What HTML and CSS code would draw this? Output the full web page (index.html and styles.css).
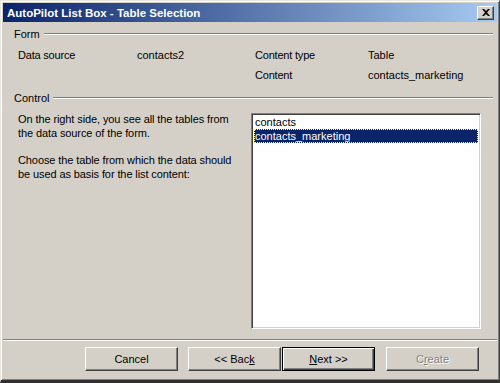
FILE: index.html
```html
<!DOCTYPE html>
<html>
<head>
<meta charset="utf-8">
<link rel="stylesheet" href="styles.css">
</head>
<body>
<div class="window">
  <div class="titlebar">
    <span class="title">AutoPilot List Box - Table Selection</span>
    <span class="close"><svg width="8" height="7" viewBox="0 0 8 7"><path d="M0 0h2l2 2 2-2h2L5 3.5 8 7H6L4 5 2 7H0l3-3.5z" fill="#000"/></svg></span>
  </div>
  <div class="body">
    <div class="group-head"><span>Form</span><span class="rule"></span></div>
    <div class="info">
      <div class="info-row">
        <span class="c1">Data source</span><span class="c2">contacts2</span><span class="c3">Content type</span><span class="c4">Table</span>
      </div>
      <div class="info-row">
        <span class="c1"></span><span class="c2"></span><span class="c3">Content</span><span class="c4">contacts_marketing</span>
      </div>
    </div>
    <div class="group-head control-head"><span>Control</span><span class="rule"></span></div>
    <div class="control">
      <div class="help">
        <p>On the right side, you see all the tables from<br>the data source of the form.</p>
        <p>Choose the table from which the data should<br>be used as basis for the list content:</p>
      </div>
      <div class="listbox">
        <div class="item">contacts</div>
        <div class="item selected">contacts_marketing</div>
      </div>
    </div>
    <div class="separator"></div>
    <div class="buttons">
      <button class="btn">Cancel</button>
      <button class="btn back">&lt;&lt; Bac<u>k</u></button>
      <button class="btn default"><u>N</u>ext &gt;&gt;</button>
      <button class="btn disabled">C<u>r</u>eate</button>
    </div>
  </div>
</div>
</body>
</html>
```
FILE: styles.css
```css
html, body {
  margin: 0;
  padding: 0;
  background: #d4d0c8;
}
.window {
  width: 500px;
  height: 383px;
  box-sizing: border-box;
  background: #d4d0c8;
  border-top: 1px solid #e8e6e0;
  border-left: 1px solid #e8e6e0;
  border-right: 1px solid #404040;
  border-bottom: 3px solid #303030;
  box-shadow: inset 1px 1px 0 #ffffff, inset -1px -1px 0 #808080;
  padding: 2px 2px 1px 2px;
  display: flex;
  flex-direction: column;
  font-family: "Liberation Sans", Arial, sans-serif;
  font-size: 11px;
  color: #000;
}
.titlebar {
  height: 19px;
  flex: none;
  background: linear-gradient(to right, #0a246a, #a6caf0);
  display: flex;
  align-items: center;
  justify-content: space-between;
  padding: 0 3px 0 4px;
}
.title {
  color: #fff;
  font-weight: bold;
  font-size: 11.5px;
}
.close {
  width: 17px;
  height: 14px;
  box-sizing: border-box;
  background: #d4d0c8;
  border-top: 1px solid #fff;
  border-left: 1px solid #fff;
  border-right: 1px solid #404040;
  border-bottom: 1px solid #404040;
  box-shadow: inset -1px -1px 0 #808080;
  display: flex;
  align-items: center;
  justify-content: center;
}
.body {
  flex: 1;
  display: flex;
  flex-direction: column;
  padding: 0 4px 0 11px;
}
.group-head {
  display: flex;
  align-items: center;
  height: 14px;
  margin-top: 5px;
}
.group-head .rule {
  flex: 1;
  height: 0;
  border-top: 1px solid #808080;
  border-bottom: 1px solid #fff;
  margin-left: 4px;
}
.info {
  padding-left: 4px;
  margin-top: 8px;
}
.info-row {
  display: flex;
  height: 14px;
  margin-bottom: 6px;
}
.c1 { width: 119px; letter-spacing: -0.2px; }
.c2 { width: 118px; }
.c3 { width: 113px; letter-spacing: -0.2px; }
.control-head {
  margin-top: 2px;
}
.control {
  display: flex;
  margin-top: 7px;
}
.help {
  width: 237px;
  box-sizing: border-box;
  padding-left: 4px;
  white-space: nowrap;
  letter-spacing: -0.1px;
}
.help p {
  margin: 0 0 13px 0;
  line-height: 14px;
}
.listbox {
  width: 230px;
  height: 216px;
  margin-top: 1px;
  box-sizing: border-box;
  background: #fff;
  border-top: 1px solid #808080;
  border-left: 1px solid #808080;
  border-right: 1px solid #fff;
  border-bottom: 1px solid #fff;
  box-shadow: inset 1px 1px 0 #404040, inset -1px -1px 0 #d4d0c8;
  padding: 1px 2px 2px 2px;
}
.item {
  height: 14px;
  line-height: 14px;
  padding-left: 1px;
  box-sizing: border-box;
}
.item.selected {
  background: #0a246a;
  color: #fff;
  outline: 1px dotted #ffff99;
  outline-offset: -1px;
}
.separator {
  margin: 10px -4px 0 -11px;
  border-top: 1px solid #808080;
  border-bottom: 1px solid #fff;
}
.buttons {
  display: flex;
  margin-top: 6px;
  padding-left: 71px;
}
.btn {
  width: 93px;
  height: 24px;
  box-sizing: border-box;
  background: #d4d0c8;
  font-family: "Liberation Sans", Arial, sans-serif;
  font-size: 11px;
  color: #000;
  border-top: 1px solid #fff;
  border-left: 1px solid #fff;
  border-right: 1px solid #404040;
  border-bottom: 1px solid #404040;
  box-shadow: inset -1px -1px 0 #808080;
  padding: 0;
  margin-right: 10px;
}
.btn.back { margin-right: 1px; }
.btn.default {
  border: 1px solid #000;
  box-shadow: inset 1px 1px 0 #fff, inset -1px -1px 0 #404040, inset -2px -2px 0 #808080;
  margin-right: 11px;
}
.btn.disabled {
  color: #808080;
  text-shadow: 1px 1px 0 #fff;
}
```
